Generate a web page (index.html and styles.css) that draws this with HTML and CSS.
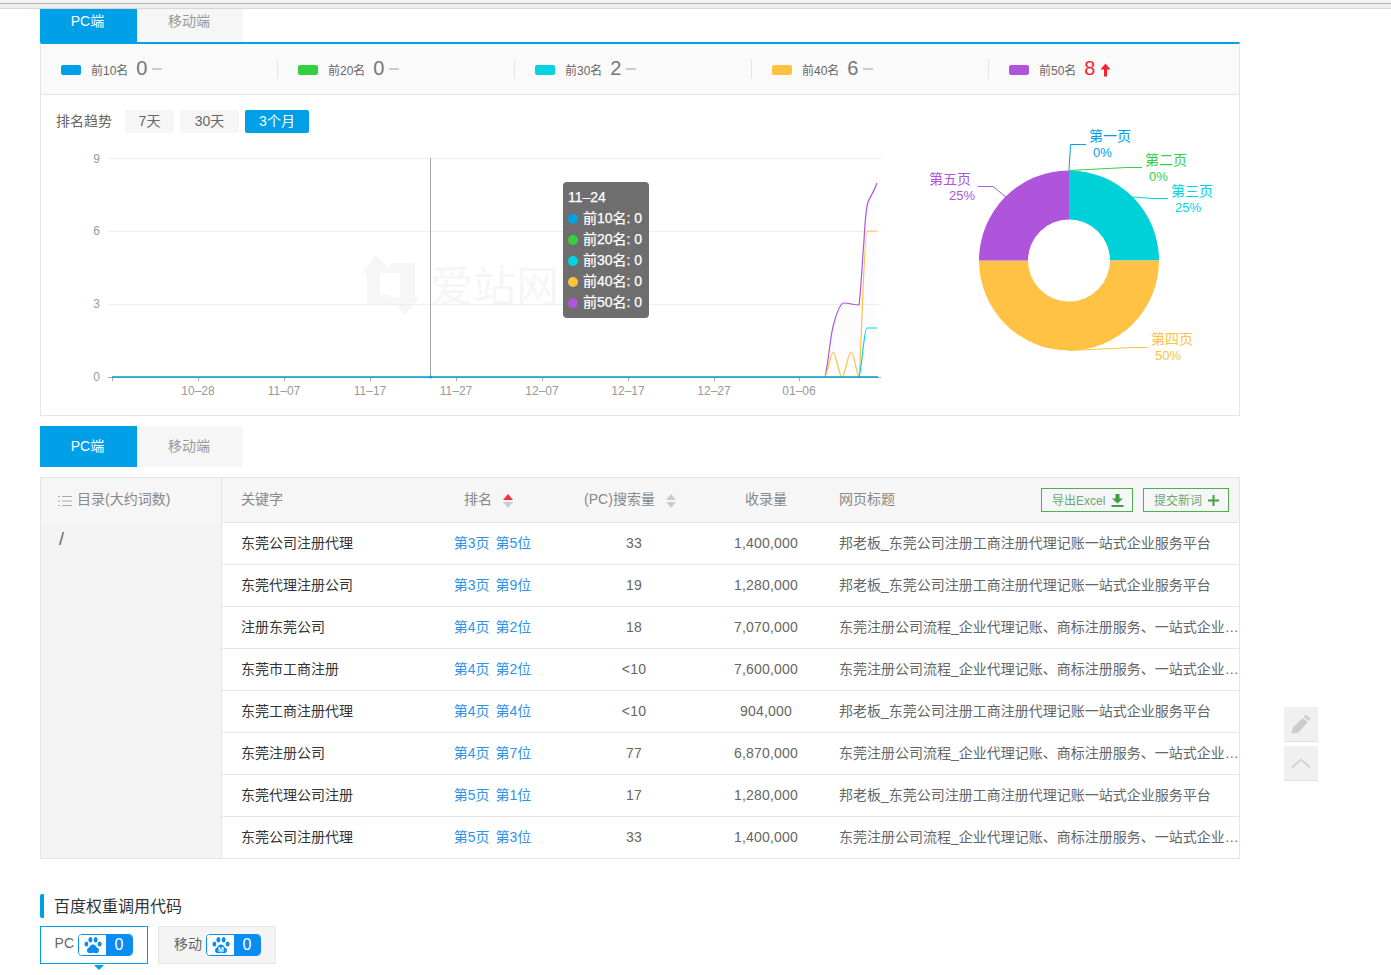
FILE: index.html
```html
<!DOCTYPE html>
<html lang="zh-CN">
<head>
    <meta charset="UTF-8">
    <title>排名趋势</title>
    <link rel="stylesheet" href="styles.css">
</head>
<body>
    <div class="top-strip"></div>

    <div class="wrap">
        <!-- 排名分布 -->
        <div class="tabs tabs-top">
            <a class="tab active">PC端</a>
            <a class="tab">移动端</a>
        </div>

        <div class="panel">
            <div class="stats">
                <div class="stat"><i class="swatch blue"></i><span class="stat-label">前10名</span><span class="stat-num">0</span><i class="dash"></i></div>
                <div class="stat"><i class="swatch green"></i><span class="stat-label">前20名</span><span class="stat-num">0</span><i class="dash"></i></div>
                <div class="stat"><i class="swatch cyan"></i><span class="stat-label">前30名</span><span class="stat-num">2</span><i class="dash"></i></div>
                <div class="stat"><i class="swatch orange"></i><span class="stat-label">前40名</span><span class="stat-num">6</span><i class="dash"></i></div>
                <div class="stat last"><i class="swatch purple"></i><span class="stat-label">前50名</span><span class="stat-num up">8</span>
                    <svg class="up-arrow" width="11" height="14" viewBox="0 0 11 14"><path d="M5.5 0.5L10.5 6.5H7V13.5H4V6.5H0.5Z" fill="#f5222d"/></svg>
                </div>
            </div>

            <div class="trend-bar">
                <span class="trend-title">排名趋势</span>
                <button class="range">7天</button>
                <button class="range">30天</button>
                <button class="range active">3个月</button>
            </div>

            <div class="charts">
                <div class="line-chart">
                    <svg width="860" height="275" viewBox="41 140 860 275">
                        <!-- 水印 -->
                        <g fill="#f6f6f6">
                            <path d="M376 255L393 273H380V295H389L395 305H367V273H362Z"/>
                            <path d="M392 263H415V297H420L405 315L390 297H400V273H385Z"/>
                        </g>
                        <text class="watermark" x="430" y="302">爱站网</text>

                        <g stroke="#eeeeee" stroke-width="1">
                            <line x1="108" y1="158.5" x2="881" y2="158.5"/>
                            <line x1="108" y1="231.5" x2="881" y2="231.5"/>
                            <line x1="108" y1="304.5" x2="881" y2="304.5"/>
                        </g>
                        <g class="axis-text" text-anchor="end">
                            <text x="100" y="163">9</text>
                            <text x="100" y="235">6</text>
                            <text x="100" y="308">3</text>
                            <text x="100" y="381">0</text>
                        </g>
                        <g stroke="#aaaaaa" stroke-width="1">
                            <line x1="108" y1="377.5" x2="881" y2="377.5"/>
                            <line x1="112.5" y1="377" x2="112.5" y2="381"/>
                            <line x1="198.5" y1="377" x2="198.5" y2="381"/>
                            <line x1="284.5" y1="377" x2="284.5" y2="381"/>
                            <line x1="370.5" y1="377" x2="370.5" y2="381"/>
                            <line x1="456.5" y1="377" x2="456.5" y2="381"/>
                            <line x1="542.5" y1="377" x2="542.5" y2="381"/>
                            <line x1="628.5" y1="377" x2="628.5" y2="381"/>
                            <line x1="714.5" y1="377" x2="714.5" y2="381"/>
                            <line x1="799.5" y1="377" x2="799.5" y2="381"/>
                        </g>
                        <g class="axis-text" text-anchor="middle">
                            <text x="198" y="395">10–28</text>
                            <text x="284" y="395">11–07</text>
                            <text x="370" y="395">11–17</text>
                            <text x="456" y="395">11–27</text>
                            <text x="542" y="395">12–07</text>
                            <text x="628" y="395">12–17</text>
                            <text x="714" y="395">12–27</text>
                            <text x="799" y="395">01–06</text>
                        </g>

                        <path d="M825 377C829 360 830 335 834 323C837 312 840 303 844 303C849 303 854 305 859 305C861 290 862 265 864 240C865 222 866 208 868 202C871 195 874 192 877 183V377Z" fill="#ae55dd" opacity="0.02"/>
                        <g fill="none" stroke-width="1.2">
                            <path d="M825 377C829 360 830 335 834 323C837 312 840 303 844 303C849 303 854 305 859 305C861 290 862 265 864 240C865 222 866 208 868 202C871 195 874 192 877 183" stroke="#ae55dd"/>
                            <path d="M825 377C829 368 831 352 833 352C836 352 839 377 842 377C845 377 848 352 851 352C854 352 857 377 859 377C861 365 864 231 867 231H877" stroke="#ffc23f"/>
                            <path d="M859 377C862 368 864 328 867 328H877" stroke="#00d4e3"/>
                        </g>
                        <line x1="112" y1="377" x2="878" y2="377" stroke="#00a0c9" stroke-width="1.5"/>
                        <line x1="430.5" y1="158" x2="430.5" y2="377" stroke="#a3a3a3" stroke-width="1"/>
                        <circle cx="430.5" cy="377" r="1.5" fill="#00a0e9"/>
                    </svg>

                    <div class="chart-tip">
                        <div class="tip-date">11–24</div>
                        <div class="tip-row"><i class="dot blue"></i>前10名: 0</div>
                        <div class="tip-row"><i class="dot green"></i>前20名: 0</div>
                        <div class="tip-row"><i class="dot cyan"></i>前30名: 0</div>
                        <div class="tip-row"><i class="dot orange"></i>前40名: 0</div>
                        <div class="tip-row"><i class="dot purple"></i>前50名: 0</div>
                    </div>
                </div>

                <svg class="pie-chart" width="338" height="295" viewBox="901 120 338 295">
                    <path d="M1069 170.5A90 90 0 0 1 1159 260.5H1110A41 41 0 0 0 1069 219.5Z" fill="#00d1d9"/>
                    <path d="M1159 260.5A90 90 0 0 1 979 260.5H1028A41 41 0 0 0 1110 260.5Z" fill="#ffc244"/>
                    <path d="M979 260.5A90 90 0 0 1 1069 170.5V219.5A41 41 0 0 0 1028 260.5Z" fill="#ae55db"/>

                    <g fill="none" stroke-width="1">
                        <path d="M1069 170L1070.5 144.5H1086" stroke="#00a0e9"/>
                        <path d="M1069 170.5L1127 167.5H1142" stroke="#33d13f"/>
                        <path d="M1133 197L1153 198.5H1168" stroke="#00d4e3"/>
                        <path d="M1069 350.5L1133 347.5H1148" stroke="#ffc23f"/>
                        <path d="M1006 197L993 186.5H978" stroke="#ae55dd"/>
                    </g>

                    <g class="pie-text">
                        <text x="1089" y="141" fill="#00a0e9">第一页</text>
                        <text class="pct" x="1093" y="157" fill="#00a0e9">0%</text>
                        <text x="1145" y="165" fill="#33d13f">第二页</text>
                        <text class="pct" x="1149" y="181" fill="#33d13f">0%</text>
                        <text x="1171" y="196" fill="#00d4e3">第三页</text>
                        <text class="pct" x="1175" y="212" fill="#00d4e3">25%</text>
                        <text x="1151" y="344" fill="#ffc23f">第四页</text>
                        <text class="pct" x="1155" y="360" fill="#ffc23f">50%</text>
                        <text x="929" y="184" fill="#ae55dd">第五页</text>
                        <text class="pct" x="949" y="200" fill="#ae55dd">25%</text>
                    </g>
                </svg>
            </div>
        </div>

        <!-- 关键词列表 -->
        <div class="tabs tabs-second">
            <a class="tab active">PC端</a>
            <a class="tab">移动端</a>
        </div>

        <div class="keyword-box">
            <div class="catalog">
                <div class="catalog-head">
                    <svg width="14" height="10" viewBox="0 0 14 10"><path d="M0 0.5H2M4 0.5H14M0 5H2M4 5H14M0 9.5H2M4 9.5H14" stroke="#aaaaaa" stroke-width="1"/></svg>
                    <span class="catalog-label">目录(大约词数)</span>
                </div>
                <div class="catalog-item">/</div>
            </div>

            <table class="keyword-table">
                <colgroup>
                    <col class="col-key"><col class="col-rank"><col class="col-search"><col class="col-count"><col>
                </colgroup>
                <thead>
                    <tr>
                        <th class="left">关键字</th>
                        <th class="rank-head">排名<span class="sort"><i class="sort-up on"></i><i class="sort-down"></i></span></th>
                        <th class="search-head">(PC)搜索量<span class="sort"><i class="sort-up"></i><i class="sort-down"></i></span></th>
                        <th>收录量</th>
                        <th class="left title-head">
                            <div class="title-bar">
                                <span class="title-label">网页标题</span>
                                <span class="actions">
                                    <a class="green-btn btn-excel"><span>导出Excel</span>
                                        <svg width="13" height="13" viewBox="0 0 13 13"><path d="M4.5 0H8.5V4.5H12L6.5 9.5L1 4.5H4.5ZM0.5 11H12.5V13H0.5Z" fill="#3f9f47"/></svg>
                                    </a>
                                    <a class="green-btn btn-new"><span>提交新词</span>
                                        <svg width="11" height="11" viewBox="0 0 11 11"><path d="M4.5 0H6.5V4.5H11V6.5H6.5V11H4.5V6.5H0V4.5H4.5Z" fill="#3f9f47"/></svg>
                                    </a>
                                </span>
                            </div>
                        </th>
                    </tr>
                </thead>
                <tbody>
                    <tr><td class="key">东莞公司注册代理</td><td class="rank">第3页 第5位</td><td>33</td><td>1,400,000</td><td class="page-title">邦老板_东莞公司注册工商注册代理记账一站式企业服务平台</td></tr>
                    <tr><td class="key">东莞代理注册公司</td><td class="rank">第3页 第9位</td><td>19</td><td>1,280,000</td><td class="page-title">邦老板_东莞公司注册工商注册代理记账一站式企业服务平台</td></tr>
                    <tr><td class="key">注册东莞公司</td><td class="rank">第4页 第2位</td><td>18</td><td>7,070,000</td><td class="page-title">东莞注册公司流程_企业代理记账、商标注册服务、一站式企业服务平台</td></tr>
                    <tr><td class="key">东莞市工商注册</td><td class="rank">第4页 第2位</td><td>&lt;10</td><td>7,600,000</td><td class="page-title">东莞注册公司流程_企业代理记账、商标注册服务、一站式企业服务平台</td></tr>
                    <tr><td class="key">东莞工商注册代理</td><td class="rank">第4页 第4位</td><td>&lt;10</td><td>904,000</td><td class="page-title">邦老板_东莞公司注册工商注册代理记账一站式企业服务平台</td></tr>
                    <tr><td class="key">东莞注册公司</td><td class="rank">第4页 第7位</td><td>77</td><td>6,870,000</td><td class="page-title">东莞注册公司流程_企业代理记账、商标注册服务、一站式企业服务平台</td></tr>
                    <tr><td class="key">东莞代理公司注册</td><td class="rank">第5页 第1位</td><td>17</td><td>1,280,000</td><td class="page-title">邦老板_东莞公司注册工商注册代理记账一站式企业服务平台</td></tr>
                    <tr><td class="key">东莞公司注册代理</td><td class="rank">第5页 第3位</td><td>33</td><td>1,400,000</td><td class="page-title">东莞注册公司流程_企业代理记账、商标注册服务、一站式企业服务平台</td></tr>
                </tbody>
            </table>
        </div>

        <!-- 百度权重 -->
        <h3 class="section-title">百度权重调用代码</h3>
        <div class="code-tabs">
            <div class="code-tab active">
                <span class="code-label">PC</span>
                <span class="bd-badge">
                    <span class="paw">
                        <svg width="18" height="17" viewBox="0 0 18 17"><g fill="#0a8cf0"><ellipse cx="2.4" cy="7" rx="2" ry="2.6"/><ellipse cx="6.4" cy="2.8" rx="2" ry="2.7"/><ellipse cx="11.6" cy="2.8" rx="2" ry="2.7"/><ellipse cx="15.6" cy="7" rx="2" ry="2.6"/><path d="M9 7.5C11.5 7.5 12 10 14 11.3C15.8 12.6 15 16.5 12 16.2C10.8 16.1 10 15.7 9 15.7C8 15.7 7.2 16.1 6 16.2C3 16.5 2.2 12.6 4 11.3C6 10 6.5 7.5 9 7.5Z"/></g></svg>
                    </span>
                    <span class="bd-num">0</span>
                </span>
                <svg class="tab-arrow" width="10" height="5" viewBox="0 0 10 5"><path d="M0 0H10L5 5Z" fill="#00a0e9"/></svg>
            </div>
            <div class="code-tab">
                <span class="code-label">移动</span>
                <span class="bd-badge">
                    <span class="paw">
                        <svg width="18" height="17" viewBox="0 0 18 17"><g fill="#0a8cf0"><ellipse cx="2.4" cy="7" rx="2" ry="2.6"/><ellipse cx="6.4" cy="2.8" rx="2" ry="2.7"/><ellipse cx="11.6" cy="2.8" rx="2" ry="2.7"/><ellipse cx="15.6" cy="7" rx="2" ry="2.6"/><path d="M9 7.5C11.5 7.5 12 10 14 11.3C15.8 12.6 15 16.5 12 16.2C10.8 16.1 10 15.7 9 15.7C8 15.7 7.2 16.1 6 16.2C3 16.5 2.2 12.6 4 11.3C6 10 6.5 7.5 9 7.5Z"/></g><text class="paw-m" x="9" y="15">M</text></svg>
                    </span>
                    <span class="bd-num">0</span>
                </span>
            </div>
        </div>
    </div>

    <!-- 右侧悬浮按钮 -->
    <div class="float-tools">
        <a class="float-btn">
            <svg width="20" height="20" viewBox="0 0 20 20"><path d="M14.5 0.5L19.5 4.5L17.8 6.7L12.8 2.7ZM11.8 4L16.8 8L7 19L0.5 19.5L2 13.5Z" fill="#cccccc"/></svg>
        </a>
        <a class="float-btn">
            <svg width="20" height="10" viewBox="0 0 20 10"><path d="M1 9.5L10 1.5L19 9.5" fill="none" stroke="#cccccc" stroke-width="1.5"/></svg>
        </a>
    </div>
</body>
</html>
```

FILE: styles.css
```css
* {
    box-sizing: border-box;
}
body {
    margin: 0;
    background-color: #fff;
    font-family: "Liberation Sans", "Noto Sans CJK SC", sans-serif;
    font-size: 14px;
    color: #666;
}
.top-strip {
    height: 9px;
    background: linear-gradient(#f3f3f3 3px, #b5b5b5 3px, #b5b5b5 4px, #eeeeee 4px);
    border-bottom: 1px solid #d6d6d6;
}
.wrap {
    width: 1200px;
    margin-left: 40px;
    padding-bottom: 11px;
}

/* 颜色 */
.blue { background-color: #00a0e9; }
.green { background-color: #33d13f; }
.cyan { background-color: #00d4e3; }
.orange { background-color: #ffc23f; }
.purple { background-color: #ae55dd; }

/* 标签页 */
.tabs {
    display: flex;
}
.tab {
    width: 106px;
    padding-right: 2px;
    text-align: center;
    background-color: #f6f6f6;
    color: #999;
}
.tab.active {
    width: 97px;
    background-color: #00a0e9;
    color: #fff;
}
.tabs-top .tab {
    height: 33px;
    line-height: 24px;
}
.tabs-second {
    margin-top: 10px;
}
.tabs-second .tab {
    height: 41px;
    line-height: 40px;
}

/* 统计 */
.panel {
    border: 1px solid #e5e5e5;
    border-top: 2px solid #00a0e9;
}
.stats {
    display: flex;
    height: 51px;
    padding-top: 15px;
    background-color: #fafafa;
    border-bottom: 1px solid #e5e5e5;
}
.stat {
    display: flex;
    align-items: center;
    width: 237px;
    height: 20px;
    padding-left: 20px;
    border-right: 1px solid #e5e5e5;
}
.stat.last {
    border-right: none;
    width: 250px;
}
.swatch {
    width: 20px;
    height: 10px;
    margin-top: 2px;
    margin-right: 10px;
    border-radius: 2px;
}
.stat-label {
    font-size: 12px;
    line-height: 20px;
    padding-top: 4px;
}
.stat-num {
    font-size: 20px;
    margin-left: 8px;
    margin-top: -1px;
    color: #777;
}
.stat-num.up {
    color: #f5222d;
}
.dash {
    width: 10px;
    height: 2px;
    margin-left: 5px;
    margin-top: -1px;
    background-color: #ccc;
}
.up-arrow {
    margin-left: 5px;
    margin-top: 2px;
}

/* 趋势 */
.trend-bar {
    display: flex;
    align-items: center;
    height: 23px;
    margin-top: 15px;
    padding-left: 15px;
}
.trend-title {
    margin-right: 13px;
    padding-bottom: 4px;
}
.range {
    height: 23px;
    padding: 0 0 3px;
    margin-right: 6px;
    border: none;
    border-radius: 2px;
    background-color: #f6f6f6;
    color: #666;
    font-family: inherit;
    font-size: 14px;
}
.range:nth-of-type(1) { width: 49px; }
.range:nth-of-type(2) { width: 59px; }
.range.active {
    width: 64px;
    background-color: #00a0e9;
    color: #fff;
}
.charts {
    display: flex;
    height: 275px;
    margin-top: 7px;
}
.line-chart {
    position: relative;
    width: 860px;
    height: 275px;
}
.line-chart svg,
.pie-chart {
    display: block;
}
.pie-chart {
    margin-top: -20px;
}
.watermark {
    font-size: 43px;
    fill: #f6f6f6;
}
.axis-text {
    font-size: 12px;
    fill: #999;
}
.pie-text {
    font-size: 14px;
}
.pie-text .pct {
    font-size: 13px;
}
.chart-tip {
    position: absolute;
    left: 522px;
    top: 42px;
    width: 86px;
    height: 136px;
    padding: 5px;
    border-radius: 4px;
    background-color: #6e6e6e;
    color: #fff;
    line-height: 21px;
    white-space: nowrap;
    -webkit-text-stroke: 0.25px #fff;
}
.tip-row {
    display: flex;
    align-items: center;
}
.dot {
    width: 10px;
    height: 10px;
    border-radius: 50%;
    margin-right: 5px;
}

/* 关键词表格 */
.keyword-box {
    display: flex;
    margin-top: 10px;
    border: 1px solid #e5e5e5;
}
.catalog {
    width: 181px;
    flex-shrink: 0;
    background-color: #f4f4f4;
    border-right: 1px solid #e5e5e5;
}
.catalog-head {
    display: flex;
    align-items: center;
    gap: 5px;
    height: 45px;
    padding-left: 17px;
    background-color: #f6f6f6;
    color: #888;
}
.catalog-label {
    padding-bottom: 5px;
}
.catalog-item {
    padding: 4px 0 0 18px;
    font-size: 18px;
    line-height: 24px;
}
.keyword-table {
    width: 1018px;
    table-layout: fixed;
    border-collapse: separate;
    border-spacing: 0;
}
.col-key { width: 199px; }
.col-rank { width: 143px; }
.col-search { width: 140px; }
.col-count { width: 124px; }
.keyword-table th {
    height: 45px;
    padding: 0 0 5px;
    background-color: #f6f6f6;
    border-bottom: 1px solid #e5e5e5;
    color: #888;
    font-weight: normal;
    text-align: center;
}
.keyword-table td {
    height: 42px;
    padding: 0 0 2px;
    border-bottom: 1px solid #e5e5e5;
    text-align: center;
    letter-spacing: 0.2px;
}
.keyword-table tr:last-child td {
    height: 41px;
    border-bottom: none;
}
.keyword-table th.left {
    text-align: left;
    padding-left: 19px;
}
.keyword-table td.key {
    text-align: left;
    padding: 0 0 4px 19px;
    color: #333;
    letter-spacing: 0;
}
.keyword-table td.rank {
    padding-bottom: 4px;
    color: #2f92e8;
    letter-spacing: 0;
    word-spacing: 2px;
}
.keyword-table td.page-title {
    text-align: left;
    padding: 0 0 4px 11px;
    overflow: hidden;
    white-space: nowrap;
    text-overflow: ellipsis;
    letter-spacing: 0;
}
.keyword-table th.title-head {
    padding: 0 10px 0 11px;
}
.keyword-table th.rank-head {
    padding-right: 8px;
}
.keyword-table th.search-head {
    padding-right: 8px;
}
.sort {
    display: inline-block;
    vertical-align: -4px;
    margin-left: 11px;
    width: 10px;
}
.sort-up,
.sort-down {
    display: block;
    width: 0;
    height: 0;
    border-left: 5px solid transparent;
    border-right: 5px solid transparent;
}
.sort-up {
    border-bottom: 6px solid #ccc;
    margin-bottom: 2px;
}
.sort-up.on {
    border-bottom-color: #f5303f;
}
.sort-down {
    border-top: 6px solid #ccc;
}
.title-bar {
    display: flex;
    align-items: center;
    justify-content: space-between;
}
.title-label {
    padding-bottom: 5px;
}
.actions {
    display: flex;
    gap: 10px;
}
.green-btn {
    display: flex;
    align-items: center;
    justify-content: space-between;
    height: 24px;
    padding: 0 5px 0 10px;
    border: 1px solid #4caf50;
    color: #6aa870;
    font-size: 12px;
}
.green-btn span {
    padding-bottom: 2px;
}
.btn-excel { width: 92px; padding-right: 8px; }
.btn-new { width: 86px; padding-right: 9px; }

/* 百度权重 */
.section-title {
    height: 24px;
    margin: 35px 0 0;
    padding-left: 10px;
    border-left: 4px solid #00a0e9;
    border-radius: 2px;
    color: #333;
    font-size: 16px;
    font-weight: normal;
    line-height: 25px;
}
.code-tabs {
    display: flex;
    gap: 10px;
    margin-top: 8px;
}
.code-tab {
    position: relative;
    display: flex;
    align-items: center;
    justify-content: flex-end;
    gap: 4px;
    width: 118px;
    height: 38px;
    padding-right: 14px;
    background-color: #f4f4f4;
    border: 1px solid #e8e8e8;
}
.code-tab.active {
    width: 108px;
    background-color: #fff;
    border-color: #00a0e9;
}
.code-label {
    padding-bottom: 4px;
}
.tab-arrow {
    position: absolute;
    left: 53px;
    top: 38px;
}
.bd-badge {
    display: flex;
    width: 55px;
    height: 22px;
    border: 1px solid #0a8cf0;
    border-radius: 4px;
    overflow: hidden;
}
.paw {
    display: flex;
    align-items: center;
    justify-content: center;
    width: 27px;
    background-color: #fff;
}
.bd-num {
    flex: 1;
    background-color: #0a8cf0;
    color: #fff;
    font-size: 16px;
    line-height: 20px;
    text-align: center;
}
.paw-m {
    fill: #fff;
    font-size: 7px;
    font-weight: bold;
    text-anchor: middle;
}

/* 悬浮按钮 */
.float-tools {
    position: absolute;
    left: 1284px;
    top: 707px;
    display: flex;
    flex-direction: column;
    gap: 4px;
}
.float-btn {
    display: flex;
    align-items: center;
    justify-content: center;
    width: 34px;
    height: 35px;
    background-color: #f0f0f0;
    border-bottom: 1px solid #e0e0e0;
}
```
